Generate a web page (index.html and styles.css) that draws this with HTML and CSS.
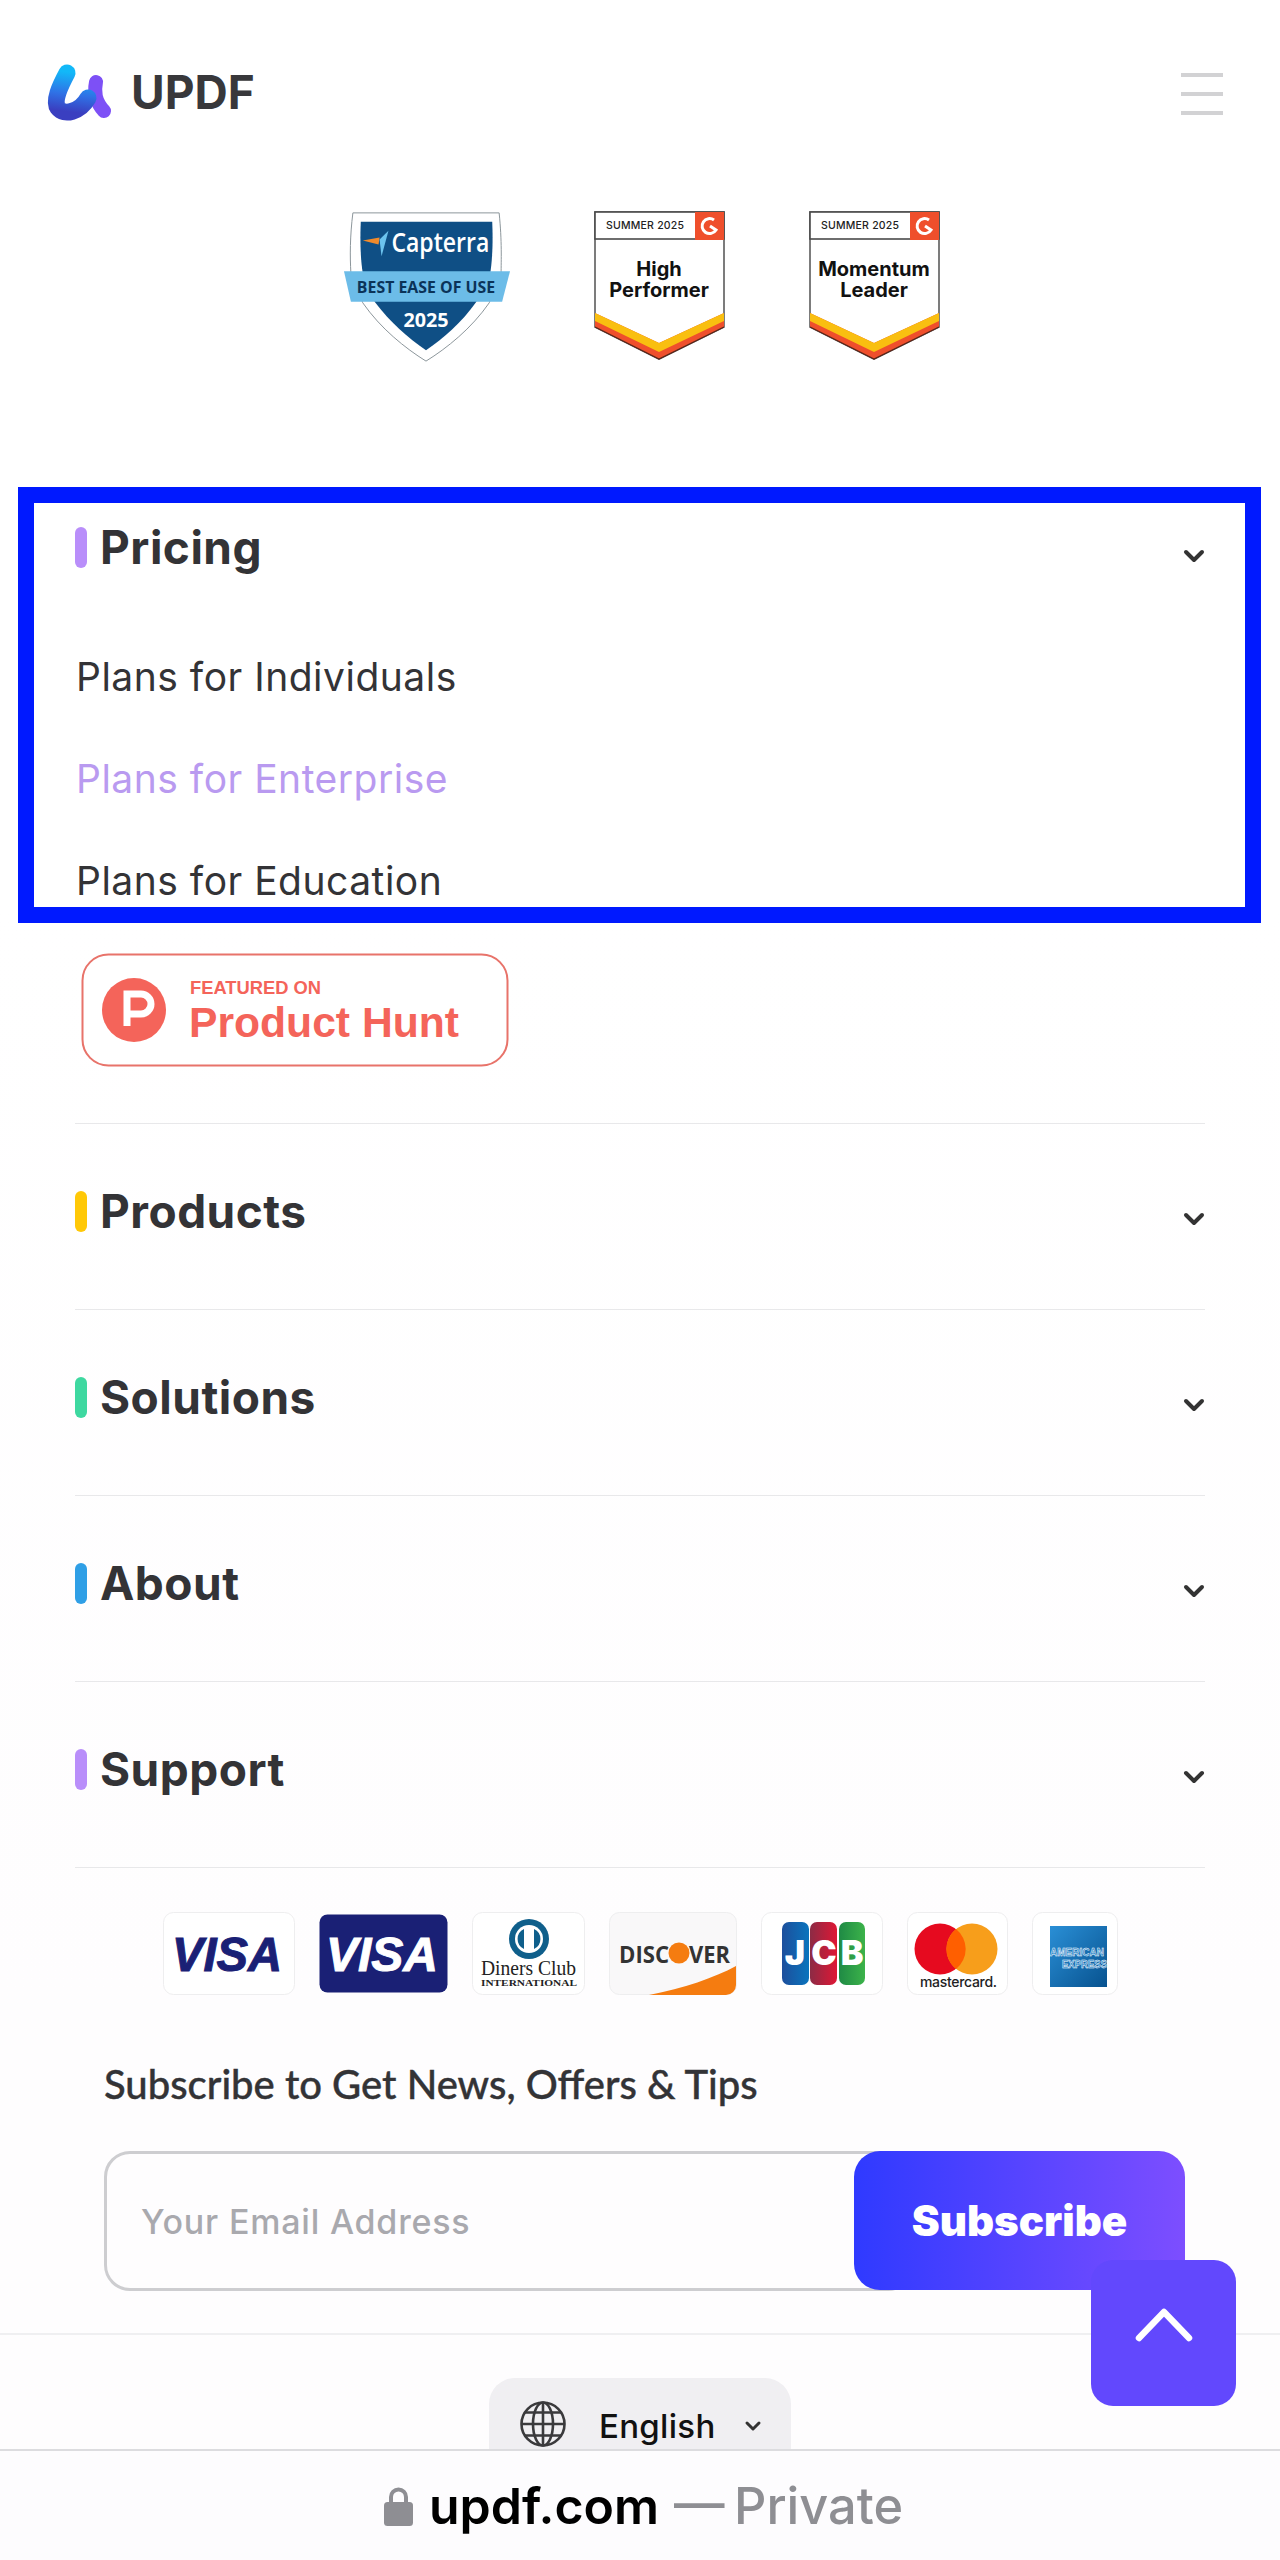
FILE: index.html
```html
<!DOCTYPE html>
<html lang="en">
<head>
<meta charset="utf-8">
<title>UPDF</title>
<link rel="stylesheet" href="styles.css">
</head>
<body>
<header class="top">
  <a class="brand">
    <svg class="brand-mark" viewBox="0 0 65 56" width="65" height="56">
      <defs>
        <linearGradient id="lg-u" x1="0.6" y1="0" x2="0.5" y2="1">
          <stop offset="0" stop-color="#12b8f8"/>
          <stop offset="0.55" stop-color="#2f72e6"/>
          <stop offset="1" stop-color="#3a3fc0"/>
        </linearGradient>
      </defs>
      <path d="M49 18 C47 28 48 37 57 47" fill="none" stroke="#7d50f6" stroke-width="14" stroke-linecap="round"/>
      <path d="M20 9 C13 22 6 37 11 44 C17 52 33 48 41 34" fill="none" stroke="url(#lg-u)" stroke-width="17" stroke-linecap="round"/>
    </svg>
    <span class="brand-name">UPDF</span>
  </a>
  <div class="burger"><i></i><i></i><i></i></div>
</header>

<div class="awards">
  <svg class="award-cap" viewBox="0 0 169 152" width="169" height="152">
    <path d="M10 1 H158 C161 30 160 50 160 62 L148 92 C130 118 105 138 84 151 C63 138 38 118 20 92 L8 62 C7 45 7 25 10 1 Z" fill="#fff" stroke="#8a9499" stroke-width="1"/>
    <path d="M18 10 H151 C152 30 151 50 149 62 L135 91 C120 112 102 128 84 140 C66 128 48 112 32 91 L20 62 C18 50 17 30 18 10 Z" fill="#0f4f85"/>
    <polygon points="1,60 169,60 161,91 8,91" fill="#6cbce8"/>
    <polygon points="20,29 37,26 36,33" fill="#ef8a2c"/>
    <polygon points="46,19 39,45 37,28" fill="#6cc3ee"/>
    <text class="cap-name" x="49" y="41" textLength="99" lengthAdjust="spacingAndGlyphs">Capterra</text>
    <text class="cap-best" x="14" y="82" textLength="140" lengthAdjust="spacingAndGlyphs">BEST EASE OF USE</text>
    <text class="cap-year" x="84" y="116" text-anchor="middle">2025</text>
  </svg>
  <svg class="award-g2" viewBox="0 0 131 150" width="131" height="150">
    <polygon points="1,1 130,1 130,116 65,148 1,116" fill="#fff" stroke="#5c5c5c" stroke-width="1.6"/>
    <polygon points="1,102 65,132 130,102 130,116 65,148 1,116" fill="#ef4f2c"/>
    <polygon points="1,102 65,132 130,102 130,110 65,141 1,110" fill="#f9bf10"/>
    <path d="M1 116 L65 148 L130 116" fill="none" stroke="#5a2418" stroke-width="1.2"/>
    <rect x="1" y="1" width="129" height="27" fill="#fff" stroke="#4a4a4a" stroke-width="1.6"/>
    <rect x="101" y="1" width="29" height="28" fill="#ef4f2c"/>
    <path d="M120 9 A7.5 7.5 0 1 0 122 19 L116 15" fill="none" stroke="#fff" stroke-width="3"/>
    <text class="g2-season" x="12" y="18" textLength="78">SUMMER 2025</text>
    <text class="g2-title" x="65" y="65" text-anchor="middle">High</text>
    <text class="g2-title" x="65" y="86" text-anchor="middle">Performer</text>
  </svg>
  <svg class="award-g2" viewBox="0 0 131 150" width="131" height="150">
    <polygon points="1,1 130,1 130,116 65,148 1,116" fill="#fff" stroke="#5c5c5c" stroke-width="1.6"/>
    <polygon points="1,102 65,132 130,102 130,116 65,148 1,116" fill="#ef4f2c"/>
    <polygon points="1,102 65,132 130,102 130,110 65,141 1,110" fill="#f9bf10"/>
    <path d="M1 116 L65 148 L130 116" fill="none" stroke="#5a2418" stroke-width="1.2"/>
    <rect x="1" y="1" width="129" height="27" fill="#fff" stroke="#4a4a4a" stroke-width="1.6"/>
    <rect x="101" y="1" width="29" height="28" fill="#ef4f2c"/>
    <path d="M120 9 A7.5 7.5 0 1 0 122 19 L116 15" fill="none" stroke="#fff" stroke-width="3"/>
    <text class="g2-season" x="12" y="18" textLength="78">SUMMER 2025</text>
    <text class="g2-title" x="65" y="65" text-anchor="middle">Momentum</text>
    <text class="g2-title" x="65" y="86" text-anchor="middle">Leader</text>
  </svg>
</div>

<section class="pricing">
  <div class="row-head">
    <span class="tick tick-purple"></span>
    <h2 class="row-title">Pricing</h2>
    <svg class="chev" viewBox="0 0 20 12" width="20" height="12"><path d="M2 2 L10 10 L18 2" fill="none" stroke="#333" stroke-width="4" stroke-linecap="round" stroke-linejoin="round"/></svg>
  </div>
  <ul class="plans">
    <li>Plans for Individuals</li>
    <li class="plan-active">Plans for Enterprise</li>
    <li>Plans for Education</li>
  </ul>
</section>

<div class="hunt">
  <svg viewBox="0 0 428 114" width="428" height="114">
    <rect x="1.5" y="1.5" width="425" height="111" rx="26" fill="#fff" stroke="#e8736a" stroke-width="2"/>
    <circle cx="53" cy="57" r="32" fill="#f4645a"/>
    <path d="M46 73 V41 H60 A10 10 0 0 1 60 61 H46" fill="none" stroke="#fff" stroke-width="7"/>
    <text class="hunt-small" x="109" y="41" textLength="131" lengthAdjust="spacingAndGlyphs">FEATURED ON</text>
    <text class="hunt-big" x="108" y="84" textLength="270" lengthAdjust="spacingAndGlyphs">Product Hunt</text>
  </svg>
</div>

<nav class="menu">
  <div class="menu-item">
    <span class="tick tick-yellow"></span>
    <h2 class="row-title">Products</h2>
    <svg class="chev" viewBox="0 0 20 12" width="20" height="12"><path d="M2 2 L10 10 L18 2" fill="none" stroke="#333" stroke-width="4" stroke-linecap="round" stroke-linejoin="round"/></svg>
  </div>
  <div class="menu-item">
    <span class="tick tick-green"></span>
    <h2 class="row-title">Solutions</h2>
    <svg class="chev" viewBox="0 0 20 12" width="20" height="12"><path d="M2 2 L10 10 L18 2" fill="none" stroke="#333" stroke-width="4" stroke-linecap="round" stroke-linejoin="round"/></svg>
  </div>
  <div class="menu-item">
    <span class="tick tick-blue"></span>
    <h2 class="row-title">About</h2>
    <svg class="chev" viewBox="0 0 20 12" width="20" height="12"><path d="M2 2 L10 10 L18 2" fill="none" stroke="#333" stroke-width="4" stroke-linecap="round" stroke-linejoin="round"/></svg>
  </div>
  <div class="menu-item">
    <span class="tick tick-purple"></span>
    <h2 class="row-title">Support</h2>
    <svg class="chev" viewBox="0 0 20 12" width="20" height="12"><path d="M2 2 L10 10 L18 2" fill="none" stroke="#333" stroke-width="4" stroke-linecap="round" stroke-linejoin="round"/></svg>
  </div>
</nav>

<div class="cards">
  <svg class="card" viewBox="0 0 132 83" width="132" height="83">
    <rect x="0.5" y="0.5" width="131" height="82" rx="10" fill="#fff" stroke="#eeeeef"/>
    <text class="visa visa-navy" x="9" y="59" textLength="110" lengthAdjust="spacingAndGlyphs">VISA</text>
  </svg>
  <svg class="card" viewBox="0 0 129 79" width="129" height="79">
    <rect x="0.5" y="0.5" width="128" height="78" rx="8" fill="#1a2075"/>
    <text class="visa visa-white" x="7" y="57" textLength="112" lengthAdjust="spacingAndGlyphs">VISA</text>
  </svg>
  <svg class="card" viewBox="0 0 113 83" width="113" height="83">
    <rect x="0.5" y="0.5" width="112" height="82" rx="10" fill="#fff" stroke="#eeeeef"/>
    <circle cx="57" cy="27" r="20" fill="#0f5f8b"/>
    <circle cx="57" cy="27" r="14" fill="#fff"/>
    <path d="M52 17 A11 11 0 0 0 52 37 Z M62 17 A11 11 0 0 1 62 37 Z" fill="#0f5f8b"/>
    <text class="din-name" x="9" y="63" textLength="95" lengthAdjust="spacingAndGlyphs">Diners Club</text>
    <text class="din-sub" x="9" y="74" textLength="96" lengthAdjust="spacingAndGlyphs">INTERNATIONAL</text>
  </svg>
  <svg class="card" viewBox="0 0 128 83" width="128" height="83">
    <rect x="0.5" y="0.5" width="127" height="82" rx="10" fill="#f9f8f9" stroke="#eeeeef"/>
    <path d="M40 83 C75 76 105 66 127 54 V73 A10 10 0 0 1 117 83 Z" fill="#f57c10"/>
    <text class="disc" x="10" y="51" textLength="50" lengthAdjust="spacingAndGlyphs">DISC</text>
    <circle cx="70" cy="41" r="10.5" fill="#f57c10"/>
    <text class="disc" x="80" y="51" textLength="41" lengthAdjust="spacingAndGlyphs">VER</text>
  </svg>
  <svg class="card" viewBox="0 0 122 83" width="122" height="83">
    <defs>
      <linearGradient id="jcb-b" x1="0" x2="1" y1="0" y2="0"><stop offset="0" stop-color="#1d4f9c"/><stop offset="1" stop-color="#0a74bd"/></linearGradient>
      <linearGradient id="jcb-r" x1="0" x2="1" y1="0" y2="0"><stop offset="0" stop-color="#8c2b45"/><stop offset="1" stop-color="#df1735"/></linearGradient>
      <linearGradient id="jcb-g" x1="0" x2="1" y1="0" y2="0"><stop offset="0" stop-color="#1f8a45"/><stop offset="1" stop-color="#3cb34a"/></linearGradient>
    </defs>
    <rect x="0.5" y="0.5" width="121" height="82" rx="10" fill="#fff" stroke="#eeeeef"/>
    <rect x="21" y="10" width="27" height="63" rx="7" fill="url(#jcb-b)"/>
    <rect x="49" y="10" width="27" height="63" rx="7" fill="url(#jcb-r)"/>
    <rect x="78" y="10" width="26" height="63" rx="7" fill="url(#jcb-g)"/>
    <text class="jcb" x="34" y="53" text-anchor="middle">J</text>
    <text class="jcb" x="63" y="53" text-anchor="middle">C</text>
    <text class="jcb" x="91" y="53" text-anchor="middle">B</text>
  </svg>
  <svg class="card" viewBox="0 0 101 83" width="101" height="83">
    <rect x="0.5" y="0.5" width="100" height="82" rx="10" fill="#fff" stroke="#eeeeef"/>
    <circle cx="33" cy="37" r="25.5" fill="#e60a1f"/>
    <circle cx="65" cy="37" r="25.5" fill="#f79e1b"/>
    <path d="M49 17 A25.5 25.5 0 0 1 49 57 A25.5 25.5 0 0 1 49 17 Z" fill="#ff5f00"/>
    <text class="mc" x="13" y="75" textLength="77">mastercard.</text>
  </svg>
  <svg class="card" viewBox="0 0 86 83" width="86" height="83">
    <defs>
      <linearGradient id="amex" x1="0" x2="1" y1="0" y2="1"><stop offset="0" stop-color="#2a8fd6"/><stop offset="1" stop-color="#07528f"/></linearGradient>
    </defs>
    <rect x="0.5" y="0.5" width="85" height="82" rx="10" fill="#fff" stroke="#eeeeef"/>
    <rect x="18" y="14" width="57" height="61" fill="url(#amex)"/>
    <text class="amex" x="18" y="44" textLength="54" lengthAdjust="spacingAndGlyphs">AMERICAN</text>
    <text class="amex" x="30" y="56" textLength="45" lengthAdjust="spacingAndGlyphs">EXPRESS</text>
  </svg>
</div>

<section class="subscribe">
  <h3 class="sub-title">Subscribe to Get News, Offers &amp; Tips</h3>
  <form class="sub-form">
    <input class="sub-input" type="email" placeholder="Your Email Address">
    <button class="sub-btn" type="button">Subscribe</button>
  </form>
</section>

<footer class="foot">
  <div class="lang">
    <svg class="globe" viewBox="0 0 46 46" width="46" height="46">
      <g fill="none" stroke="#3a3a3c" stroke-width="2.6">
        <ellipse cx="23" cy="23" rx="21.5" ry="21.5"/>
        <ellipse cx="23" cy="23" rx="10" ry="21.5"/>
        <path d="M23 1.5 V44.5 M1.5 23 H44.5 M5 11.5 H41 M5 34.5 H41"/>
      </g>
    </svg>
    <span class="lang-name">English</span>
    <svg class="lang-chev" viewBox="0 0 16 10" width="16" height="10"><path d="M2 2 L8 8 L14 2" fill="none" stroke="#333" stroke-width="3" stroke-linecap="round" stroke-linejoin="round"/></svg>
  </div>
</footer>

<button class="to-top" type="button" aria-label="Back to top">
  <svg viewBox="0 0 60 36" width="60" height="36"><path d="M5 31 L30 5 L55 31" fill="none" stroke="#fff" stroke-width="6.5" stroke-linecap="round" stroke-linejoin="round"/></svg>
</button>

<div class="urlbar">
  <svg class="lock" viewBox="0 0 29 40" width="29" height="40">
    <path d="M7 18 V11 A7.5 7.5 0 0 1 22 11 V18" fill="none" stroke="#8e8e93" stroke-width="4"/>
    <rect x="0" y="16" width="29" height="24" rx="3.5" fill="#8e8e93"/>
  </svg>
  <span class="url-host">updf.com</span>
  <span class="url-note">— Private</span>
</div>
</body>
</html>
```

FILE: styles.css
```css
* { box-sizing: border-box; }
html, body { margin: 0; padding: 0; }
body {
  position: relative;
  width: 1280px;
  height: 2560px;
  overflow: hidden;
  background: linear-gradient(#ffffff 0, #ffffff 900px, #fefdfe 2000px);
  font-family: Inter, "Liberation Sans", sans-serif;
  color: #333336;
}
svg { display: block; overflow: visible; }
h2, h3, ul { margin: 0; padding: 0; }

.top {
  display: flex;
  justify-content: space-between;
  align-items: center;
  height: 184px;
  padding: 0 57px 0 47px;
}
.brand { display: flex; align-items: center; gap: 19px; }
.brand-name { font-size: 46px; font-weight: 700; letter-spacing: 0; color: #38383b; line-height: 1; }
.burger { display: flex; flex-direction: column; gap: 15px; width: 42px; margin-top: 3px; }
.burger i { display: block; height: 4px; background: #d2d2d4; }

.awards {
  display: flex;
  gap: 84px;
  padding-left: 343px;
  height: 303px;
  padding-top: 27px;
  align-items: flex-start;
}
.award-cap { width: 167px; flex: none; }
.cap-name { font: 600 28px "Open Sans", sans-serif; fill: #fff; }
.cap-best { font: 700 16px "Open Sans", sans-serif; fill: #0b3358; }
.cap-year { font: 700 20px "Open Sans", sans-serif; fill: #fff; }
.g2-season { font: 500 10.5px Inter, sans-serif; fill: #222; }
.g2-title { font: 700 20px Inter, sans-serif; fill: #111; }

.pricing {
  width: 1243px;
  height: 436px;
  margin-left: 18px;
  border: 16px solid #0019ff;
  padding: 24px 40px 0 41px;
  overflow: hidden;
}
.row-head { display: flex; align-items: center; height: 41px; }
.tick { flex: none; width: 12px; height: 41px; border-radius: 6px; margin-right: 13px; }
.tick-purple { background: #b98efa; }
.tick-yellow { background: #ffc807; }
.tick-green { background: #3ed8a0; }
.tick-blue { background: #2f9fe6; }
.row-title { flex: 1; font-size: 46px; font-weight: 700; letter-spacing: 0.5px; line-height: 41px; color: #333336; }
.chev { flex: none; margin: 16px 1px 0 0; }
.plans { list-style: none; margin-top: 58px; padding-left: 1px; }
.plans li { font-size: 39px; letter-spacing: 0.5px; line-height: 102px; font-weight: 400; color: #333336; }
.plans .plan-active { color: #b99af0; }

.hunt { padding: 30px 0 0 81px; }
.hunt-small { font: 700 19px "Liberation Sans", sans-serif; fill: #f4645a; }
.hunt-big { font: 700 43px "Liberation Sans", sans-serif; fill: #f4645a; }

.menu { margin: 56px 75px 0; border-top: 1px solid #e8e8ea; }
.menu-item {
  display: flex;
  align-items: center;
  height: 186px;
  padding: 0 0 11px;
  border-bottom: 1px solid #e8e8ea;
}

.cards {
  display: flex;
  justify-content: center;
  align-items: center;
  gap: 24px;
  margin-top: 44px;
}
.card { flex: none; }
.visa { font: italic 700 48px "Liberation Sans", sans-serif; stroke-width: 1px; }
.visa-navy { fill: #1a2075; stroke: #1a2075; }
.visa-white { fill: #fff; stroke: #fff; }
.din-name { font: 400 21px "Liberation Serif", serif; fill: #222; }
.din-sub { font: 700 9px "Liberation Serif", serif; fill: #222; }
.disc { font: 700 24px "Open Sans", sans-serif; fill: #333; }
.jcb { font: 900 34px Inter, sans-serif; fill: #fff; }
.mc { font: 500 14px Inter, sans-serif; fill: #222; }
.amex { font: 700 10.5px "Liberation Sans", sans-serif; fill: #1f7ec6; stroke: #fff; stroke-width: 0.5; }

.subscribe { padding: 0 95px 0 104px; }
.sub-title {
  margin-top: 64px;
  font-family: Lato, sans-serif;
  font-size: 40px;
  font-weight: 500;
  -webkit-text-stroke: 0.4px #333336;
  line-height: 50px;
  color: #333336;
}
.sub-form { display: flex; margin-top: 42px; height: 140px; }
.sub-input {
  flex: 1;
  min-width: 0;
  margin-right: -60px;
  padding: 0 0 0 34px;
  border: 3px solid #cdcdd0;
  border-radius: 26px;
  background: transparent;
  font: 500 34px Inter, sans-serif;
  letter-spacing: 0.8px;
  outline: none;
}
.sub-input::placeholder { color: #a9a9ae; opacity: 1; }
.sub-btn {
  position: relative;
  flex: none;
  width: 331px;
  height: 139px;
  border: 0;
  border-radius: 26px;
  background: linear-gradient(90deg, #2f3aff, #7d4eff);
  color: #fff;
  font: 900 42px Inter, sans-serif;
}

.foot { margin-top: 42px; border-top: 2px solid #efeff1; padding-top: 43px; }
.lang {
  display: flex;
  align-items: flex-start;
  width: 302px;
  height: 120px;
  margin-left: 489px;
  padding: 23px 0 0 31px;
  background: #f0eff2;
  border-radius: 26px 26px 0 0;
}
.lang-name { margin-left: 33px; font-size: 33px; letter-spacing: 0.3px; font-weight: 500; line-height: 50px; color: #111; }
.lang-chev { margin: 20px 0 0 29px; }

.to-top {
  position: absolute;
  left: 1091px;
  top: 2260px;
  display: flex;
  align-items: center;
  justify-content: center;
  width: 145px;
  height: 146px;
  padding: 0 0 16px;
  border: 0;
  border-radius: 22px;
  background: #6248fd;
}

.urlbar {
  position: absolute;
  left: 0;
  right: 0;
  bottom: 0;
  display: flex;
  justify-content: center;
  align-items: center;
  gap: 15px;
  height: 111px;
  padding: 0 0 0 7px;
  background: #fdfcfe;
  border-top: 2px solid #dcdcdf;
  font-size: 50px;
}
.lock { flex: none; margin-right: 1px; }
.url-host { font-weight: 600; color: #000; }
.url-note { font-size: 50.5px; word-spacing: -4px; font-weight: 500; color: #8e8e93; }
```
